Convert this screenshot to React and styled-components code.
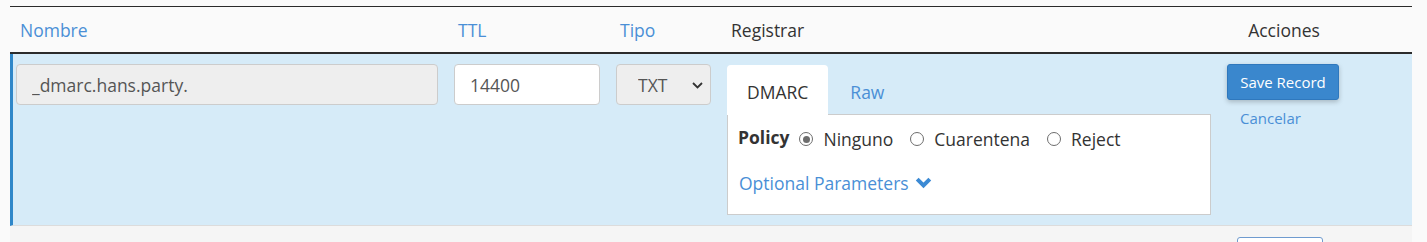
import React from "react"
import styled, { createGlobalStyle } from "styled-components"

const GlobalStyle = createGlobalStyle`
  body {
    margin: 0;
    background: #fafafa;
    font-family: "Open Sans", "Noto Sans", sans-serif;
    font-size: 17.5px;
    color: #333;
  }
`

const Page = styled.div`
  padding: 6px 15px 0 10px;
  height: 236px;
  overflow: hidden;
`

const Table = styled.div`
  width: 1402px;
  border-top: 1px solid #2b2b2b;
`

const HeaderRow = styled.div`
  display: grid;
  grid-template-columns: 438px 162px 111px 500px 126px 1fr;
  height: 45px;
  border-bottom: 2px solid #2b2b2b;
  background: #fafafa;
`

const HeadCell = styled.div`
  display: flex;
  align-items: center;
  justify-content: ${p => (p.$center ? "center" : "flex-start")};
  padding: 1px 10px 0;
  color: ${p => (p.$link ? "#4a8fd6" : "#333")};
`

const EditRow = styled.div`
  display: grid;
  grid-template-columns: 435px 162px 111px 500px 126px 1fr;
  height: 172px;
  box-sizing: border-box;
  background: #d6ebf8;
  border-left: 3px solid #2f87c9;
  border-bottom: 1px solid #dcdcdc;
`

const Cell = styled.div`
  padding: 10px 6px 0 ${p => p.$pl || 6}px;
  box-sizing: border-box;
`

const TextInput = styled.input`
  box-sizing: border-box;
  width: ${p => p.$w}px;
  height: 41px;
  padding: 0 15px;
  border: 1px solid #ccc;
  border-radius: 4px;
  background: ${p => (p.disabled ? "#eeeeee" : "#fff")};
  font-family: inherit;
  font-size: 17.5px;
  color: #555;
  outline: none;
`

const SelectWrap = styled.div`
  position: relative;
  width: 95px;
  height: 41px;
`

const Select = styled.select`
  appearance: none;
  box-sizing: border-box;
  width: 100%;
  height: 100%;
  padding: 0 0 0 21px;
  border: 1px solid #ccc;
  border-radius: 4px;
  background: #eeeeee;
  font-family: inherit;
  font-size: 17.5px;
  color: #555;
  opacity: 1;
`

const SelectArrow = styled.svg`
  position: absolute;
  right: 8px;
  top: 18px;
  pointer-events: none;
`

const Tabs = styled.div`
  display: flex;
  gap: 2px;
  margin-top: 1px;
`

const Tab = styled.div`
  height: 50px;
  padding: 3px 20px 0;
  display: flex;
  align-items: center;
  box-sizing: border-box;
  border-radius: 4px 4px 0 0;
  background: ${p => (p.$active ? "#fff" : "transparent")};
  color: ${p => (p.$active ? "#333" : "#4a8fd6")};
  position: relative;
  z-index: 1;
  margin-bottom: -1px;
`

const Panel = styled.div`
  width: 484px;
  height: 101px;
  box-sizing: border-box;
  background: #fff;
  border: 1px solid #ccc;
  padding: 12px 10px 0 10px;
`

const PolicyRow = styled.div`
  display: flex;
  align-items: center;
  height: 24px;
`

const PolicyLabel = styled.span`
  font-weight: 700;
  margin-right: 10px;
  position: relative;
  top: -2px;
`

const RadioOption = styled.label`
  display: flex;
  align-items: center;
  margin-right: 17px;
  color: #333;
`

const RadioDot = styled.span`
  width: 14px;
  height: 14px;
  box-sizing: border-box;
  border-radius: 50%;
  border: 1px solid #6d6d6d;
  background: #fff;
  margin-right: 10px;
  position: relative;

  &::after {
    content: "";
    display: ${p => (p.$checked ? "block" : "none")};
    position: absolute;
    left: 2.5px;
    top: 2.5px;
    width: 7px;
    height: 7px;
    border-radius: 50%;
    background: #6d6d6d;
  }
`

const OptionalLink = styled.a`
  display: inline-flex;
  align-items: center;
  margin-top: 20px;
  margin-left: 1px;
  color: #4a8fd6;
  text-decoration: none;

  svg {
    margin-left: 6px;
  }
`

const ActionsCell = styled(Cell)`
  display: flex;
  flex-direction: column;
  align-items: flex-start;
`

const SaveButton = styled.button`
  width: 112px;
  height: 36px;
  padding: 0;
  border: 1px solid #2f78bd;
  border-radius: 3px;
  background: #3a87cd;
  color: #fff;
  font-family: inherit;
  font-size: 15px;
  box-shadow: 0 2px 5px rgba(0, 0, 0, 0.22);
`

const CancelLink = styled.a`
  margin: 8px 0 0 13px;
  font-size: 15px;
  color: #4a8fd6;
  text-decoration: none;
`

const Footer = styled.div`
  width: 1402px;
  height: 20px;
  background: #f5f5f5;
  display: flex;
`

const PagerBox = styled.div`
  margin: 11px 0 0 1227px;
  width: 86px;
  height: 20px;
  box-sizing: border-box;
  border: 1px solid #6f9bcf;
  border-radius: 3px;
  background: #fff;
`

const Chevron = () => (
  <svg width="17" height="12" viewBox="0 0 17 12">
    <path d="M2.2 2.2l6.3 6.3 6.3-6.3" fill="none" stroke="#3c8ad4" strokeWidth="4" strokeLinejoin="miter" />
  </svg>
)

export default function App() {
  return (
    <>
      <GlobalStyle />
      <Page>
        <Table>
          <HeaderRow>
            <HeadCell $link>Nombre</HeadCell>
            <HeadCell $link>TTL</HeadCell>
            <HeadCell $link>Tipo</HeadCell>
            <HeadCell>Registrar</HeadCell>
            <HeadCell $center>Acciones</HeadCell>
            <HeadCell />
          </HeaderRow>
          <EditRow>
            <Cell $pl={3}>
              <TextInput $w={422} disabled defaultValue="_dmarc.hans.party." />
            </Cell>
            <Cell>
              <TextInput $w={146} defaultValue="14400" />
            </Cell>
            <Cell>
              <SelectWrap>
                <Select disabled defaultValue="TXT">
                  <option>TXT</option>
                </Select>
                <SelectArrow width="11" height="7" viewBox="0 0 11 7">
                  <path d="M1 1l4.5 4.5 4.5-4.5" fill="none" stroke="#333" strokeWidth="1.8" />
                </SelectArrow>
              </SelectWrap>
            </Cell>
            <Cell>
              <Tabs>
                <Tab $active>DMARC</Tab>
                <Tab>Raw</Tab>
              </Tabs>
              <Panel>
                <PolicyRow>
                  <PolicyLabel>Policy</PolicyLabel>
                  <RadioOption>
                    <RadioDot $checked />
                    Ninguno
                  </RadioOption>
                  <RadioOption>
                    <RadioDot />
                    Cuarentena
                  </RadioOption>
                  <RadioOption>
                    <RadioDot />
                    Reject
                  </RadioOption>
                </PolicyRow>
                <OptionalLink href="#">
                  Optional Parameters
                  <Chevron />
                </OptionalLink>
              </Panel>
            </Cell>
            <ActionsCell>
              <SaveButton>Save Record</SaveButton>
              <CancelLink href="#">Cancelar</CancelLink>
            </ActionsCell>
            <Cell />
          </EditRow>
          <Footer>
            <PagerBox />
          </Footer>
        </Table>
      </Page>
    </>
  )
}
